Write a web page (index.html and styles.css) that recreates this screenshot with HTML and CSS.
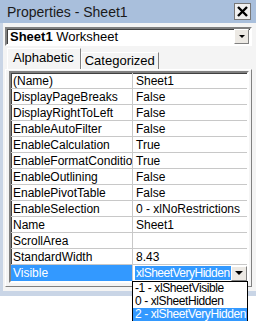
FILE: index.html
```html
<!DOCTYPE html>
<html lang="en">
	<head>
		<meta charset="UTF-8" />
		<title>Properties - Sheet1</title>
		<link rel="stylesheet" href="styles.css">
	</head>
	<body>
		<div class="window">
			<div class="titlebar">
				<span class="title">Properties - Sheet1</span>
				<span class="close">
					<svg width="11" height="11" viewBox="0 0 11 11"><path d="M1 1 L10 10 M10 1 L1 10" stroke="#000" stroke-width="2.4"/></svg>
				</span>
			</div>
			<div class="body">
				<div class="combo">
					<span class="combo-text"><b>Sheet1</b> Worksheet</span>
					<span class="combo-btn"><i class="arrow small"></i></span>
				</div>
				<div class="tabs">
					<div class="tab active">Alphabetic</div>
					<div class="tab">Categorized</div>
				</div>
				<div class="panel">
					<div class="grid">
						<div class="row"><div class="key">(Name)</div><div class="val">Sheet1</div></div>
						<div class="row"><div class="key">DisplayPageBreaks</div><div class="val">False</div></div>
						<div class="row"><div class="key">DisplayRightToLeft</div><div class="val">False</div></div>
						<div class="row"><div class="key">EnableAutoFilter</div><div class="val">False</div></div>
						<div class="row"><div class="key">EnableCalculation</div><div class="val">True</div></div>
						<div class="row"><div class="key">EnableFormatConditionsCalculation</div><div class="val">True</div></div>
						<div class="row"><div class="key">EnableOutlining</div><div class="val">False</div></div>
						<div class="row"><div class="key">EnablePivotTable</div><div class="val">False</div></div>
						<div class="row"><div class="key">EnableSelection</div><div class="val">0 - xlNoRestrictions</div></div>
						<div class="row"><div class="key">Name</div><div class="val">Sheet1</div></div>
						<div class="row"><div class="key">ScrollArea</div><div class="val"></div></div>
						<div class="row"><div class="key">StandardWidth</div><div class="val">8.43</div></div>
						<div class="row selected">
							<div class="key">Visible</div>
							<div class="val edit">
								<span class="sel-text">xlSheetVeryHidden</span><span class="caret"></span>
								<span class="drop-btn"><i class="arrow"></i></span>
							</div>
						</div>
					</div>
				</div>
			</div>
		</div>
		<div class="dropdown">
			<div class="opt">-1 - xlSheetVisible</div>
			<div class="opt">0 - xlSheetHidden</div>
			<div class="opt hot">2 - xlSheetVeryHidden</div>
		</div>
	</body>
</html>
```

FILE: styles.css
```css
body {
	margin: 0;
	width: 259px;
	height: 321px;
	background: #fff;
	font-family: "Liberation Sans", Arial, sans-serif;
	font-size: 12px;
	color: #000;
	position: relative;
	overflow: hidden;
}
.window {
	width: 256px;
	background: #c9d5e6;
	padding-bottom: 5px;
}
.titlebar {
	height: 23px;
	display: flex;
	align-items: center;
	justify-content: space-between;
	background: #a9bfdc;
	padding: 0 5px 0 7px;
}
.title {
	font-size: 14px;
	color: #1a1a1a;
	padding-top: 1px;
}
.close {
	width: 15px;
	height: 15px;
	background: #f0f0f0;
	border: 1px solid #777;
	display: flex;
	align-items: center;
	justify-content: center;
}
.body {
	margin-left: 3px;
	background: #f4f4f4;
	padding: 4px 4px 4px 2px;
}
.combo {
	height: 15px;
	display: flex;
	align-items: center;
	justify-content: space-between;
	background: #fff;
	border: 2px solid;
	border-color: #808080 #fff #fff #808080;
	box-shadow: inset 1px 1px 0 #404040;
	font-size: 13px;
}
.combo-text {
	padding-left: 3px;
}
.combo-btn {
	width: 13px;
	height: 13px;
	margin-right: 1px;
	background: #ece9e4;
	border: 1px solid;
	border-color: #fff #808080 #808080 #fff;
	display: flex;
	align-items: center;
	justify-content: center;
}
.arrow {
	display: block;
	width: 0;
	height: 0;
	border-left: 4px solid transparent;
	border-right: 4px solid transparent;
	border-top: 4px solid #000;
}
.arrow.small {
	border-left-width: 3px;
	border-right-width: 3px;
	border-top-width: 3px;
}
.tabs {
	display: flex;
	align-items: flex-end;
	margin-top: 2px;
	padding-left: 2px;
	height: 21px;
	font-size: 13px;
}
.tab {
	height: 16px;
	padding: 0 3px;
	border: 1px solid;
	border-bottom: none;
	border-color: #fff #808080 #808080 #fff;
	line-height: 16px;
}
.tab.active {
	height: 20px;
	padding: 0 6px 0 5px;
	line-height: 18px;
	position: relative;
	z-index: 1;
}
.panel {
	border: 1px solid;
	border-color: #fff #808080 #808080 #fff;
	padding: 1px 2px 3px 3px;
}
.grid {
	border: 2px solid;
	border-color: #808080 #fff #fff #808080;
	box-shadow: inset 1px 1px 0 #404040;
	background: #fff;
}
.row {
	display: flex;
	height: 16px;
	border-bottom: 1px solid #c8c8c8;
	box-sizing: border-box;
}
.row:last-child {
	border-bottom: none;
}
.key {
	width: 122px;
	padding-left: 2px;
	line-height: 16px;
	white-space: nowrap;
	overflow: hidden;
	border-right: 1px solid #c8c8c8;
	flex: none;
	box-sizing: border-box;
}
.val {
	padding-left: 3px;
	line-height: 16px;
	white-space: nowrap;
	flex: 1;
	min-width: 0;
}
.row.selected .key {
	background: #3399ff;
	color: #fff;
}
.val.edit {
	display: flex;
	align-items: center;
	padding-left: 2px;
}
.sel-text {
	background: #3399ff;
	color: #fff;
	line-height: 14px;
	padding: 0 1px;
	letter-spacing: -0.5px;
}
.caret {
	width: 1px;
	height: 13px;
	background: #000;
}
.drop-btn {
	margin-left: auto;
	margin-right: 1px;
	width: 14px;
	height: 13px;
	background: #ece9e4;
	border: 1px solid;
	border-color: #fff #808080 #808080 #fff;
	display: flex;
	align-items: center;
	justify-content: center;
	flex: none;
}
.dropdown {
	position: absolute;
	left: 132px;
	top: 281px;
	width: 114px;
	background: #fff;
	border: 1px solid #000;
}
.opt {
	height: 13px;
	line-height: 13px;
	padding-left: 2px;
	white-space: nowrap;
	letter-spacing: -0.4px;
}
.opt.hot {
	background: #3399ff;
	color: #fff;
}
```
